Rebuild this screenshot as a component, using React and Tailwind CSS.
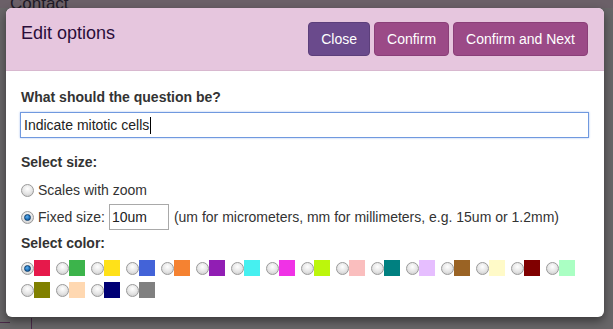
import React from "react";

const colors = [
  "#e6194b", "#3cb44b", "#ffe119", "#4363d8", "#f58231", "#911eb4", "#46f0f0", "#f032e6",
  "#bcf60c", "#fabebe", "#008080", "#e6beff", "#9a6324", "#fffac8", "#800000", "#aaffc3",
  "#808000", "#ffd8b1", "#000075", "#808080",
];

function Radio({ checked }) {
  return (
    <span className="relative inline-flex h-[13px] w-[13px] shrink-0 items-center justify-center rounded-full border border-[#9a9a9a] bg-[radial-gradient(circle_at_50%_35%,#ffffff_0%,#e4e4e4_55%,#c4c4c4_100%)]">
      {checked && (
        <span className="h-[7px] w-[7px] rounded-full border border-[#0e3f6e] bg-[radial-gradient(circle_at_40%_35%,#5fb0f0_0%,#1d6fb8_60%,#0c4a86_100%)]" />
      )}
    </span>
  );
}

export default function App() {
  return (
    <div
      className="relative h-[329px] w-[613px] overflow-hidden bg-[#686668]"
      style={{ fontFamily: '"Liberation Sans", Arial, sans-serif' }}
    >
      {/* page behind the overlay */}
      <div className="absolute left-0 top-0 h-[8px] w-full bg-[#6b6068]" />
      <div className="absolute left-[10px] top-[-9px] text-[17px] text-[#1e1a26]">Contact</div>
      <div className="absolute left-[31px] top-[318px] h-[11px] w-px bg-[#4a2a48]" />
      <div className="absolute left-0 top-[322px] h-px w-[10px] bg-[#4a2a48]" />

      <div className="relative ml-[6px] mt-[8px] h-[309px] w-[598px] overflow-hidden rounded-[6px] bg-white shadow-[0_4px_10px_rgba(0,0,0,0.45)]">
        {/* header */}
        <div className="flex h-[63px] items-center justify-between border-b border-[#d8b8cf] bg-[#e6c6de] pl-[15px] pr-[16px]">
          <div className="mt-[-12px] text-[18px] text-[#2a0d3a]">Edit options</div>
          <div className="flex gap-[4px]">
            <button className="h-[34px] rounded-[4px] border border-[#5c3f7b] bg-[#6a4a8c] px-[12px] text-[14px] text-white">
              Close
            </button>
            <button className="h-[34px] rounded-[4px] border border-[#8a3f78] bg-[#9b4a87] px-[12px] text-[14px] text-white">
              Confirm
            </button>
            <button className="h-[34px] rounded-[4px] border border-[#8a3f78] bg-[#9b4a87] px-[12px] text-[14px] text-white">
              Confirm and Next
            </button>
          </div>
        </div>

        {/* body */}
        <div className="flex flex-col px-[14px] pt-[18px] text-[14px] text-[#333]">
          <div className="pl-[1px] font-bold leading-[17px]">What should the question be?</div>
          <div className="mt-[6px] flex h-[26px] w-[569px] items-center border border-[#7099df] pl-[3px] shadow-[0_0_2px_#a9c2f0] text-[#222]">
            Indicate mitotic cells<span className="ml-px h-[17px] w-px bg-black" />
          </div>

          <div className="mt-[16px] pl-[1px] font-bold leading-[17px]">Select size:</div>
          <div className="mt-[11px] flex items-center gap-[4px] pl-[1px] leading-[17px]">
            <Radio />
            <span>Scales with zoom</span>
          </div>
          <div className="mt-[5px] flex items-center pl-[1px] leading-[17px]">
            <Radio checked />
            <span className="ml-[4px]">Fixed size:</span>
            <span className="ml-[4px] flex h-[26px] w-[60px] items-center border border-[#a9a9a9] pl-[2px] text-[#222]">10um</span>
            <span className="ml-[5px]">(um for micrometers, mm for millimeters, e.g. 15um or 1.2mm)</span>
          </div>

          <div className="mt-[5px] pl-[1px] font-bold leading-[17px]">Select color:</div>
          <div className="mt-[8px] flex w-[575px] flex-wrap gap-x-[6px] gap-y-[6px] pl-[1px]">
            {colors.map((c, i) => (
              <div key={c} className="flex items-center">
                <Radio checked={i === 0} />
                <span className="h-[16px] w-[16px]" style={{ backgroundColor: c }} />
              </div>
            ))}
          </div>
        </div>
      </div>
    </div>
  );
}
